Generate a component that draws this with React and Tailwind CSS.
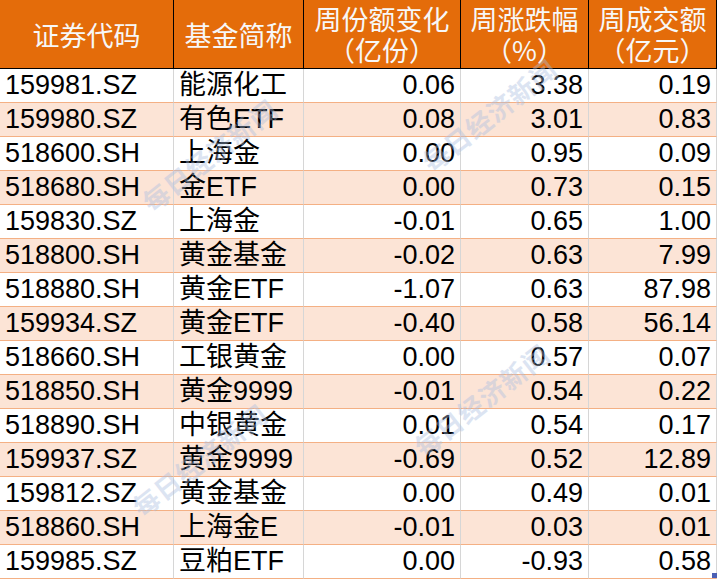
import React from "react";

const rows = [
  ["159981.SZ", "能源化工", "0.06", "3.38", "0.19"],
  ["159980.SZ", "有色ETF", "0.08", "3.01", "0.83"],
  ["518600.SH", "上海金", "0.00", "0.95", "0.09"],
  ["518680.SH", "金ETF", "0.00", "0.73", "0.15"],
  ["159830.SZ", "上海金", "-0.01", "0.65", "1.00"],
  ["518800.SH", "黄金基金", "-0.02", "0.63", "7.99"],
  ["518880.SH", "黄金ETF", "-1.07", "0.63", "87.98"],
  ["159934.SZ", "黄金ETF", "-0.40", "0.58", "56.14"],
  ["518660.SH", "工银黄金", "0.00", "0.57", "0.07"],
  ["518850.SH", "黄金9999", "-0.01", "0.54", "0.22"],
  ["518890.SH", "中银黄金", "0.01", "0.54", "0.17"],
  ["159937.SZ", "黄金9999", "-0.69", "0.52", "12.89"],
  ["159812.SZ", "黄金基金", "0.00", "0.49", "0.01"],
  ["518860.SH", "上海金E", "-0.01", "0.03", "0.01"],
  ["159985.SZ", "豆粕ETF", "0.00", "-0.93", "0.58"],
];

const headers = [
  ["证券代码"],
  ["基金简称"],
  ["周份额变化", "（亿份）"],
  ["周涨跌幅", "（%）"],
  ["周成交额", "（亿元）"],
];

const marks = [
  { left: 128, top: 135 },
  { left: 408, top: 95 },
  { left: 400, top: 380 },
  { left: 118, top: 440 },
];

export default function App() {
  return (
    <div
      className="relative w-[717px] h-[579px] overflow-hidden bg-white text-black"
      style={{ fontFamily: '"Liberation Sans", "Noto Sans CJK SC", sans-serif' }}
    >
      <div className="grid grid-cols-[174px_130px_157px_128px_128px]">
        {headers.map((h, i) => (
          <div
            key={i}
            className="h-[69px] bg-[#E46C0A] border-r border-b border-black flex flex-col items-center justify-center text-[#F7F7F7] text-[27px] leading-[31px]"
            style={{ fontFamily: '"Noto Sans CJK SC", sans-serif' }}
          >
            {h.map((t, j) => (
              <div key={j}>{t}</div>
            ))}
          </div>
        ))}
        {rows.map((r, ri) =>
          r.map((c, ci) => (
            <div
              key={ri + "-" + ci}
              className={
                "h-[34px] border-b border-b-[#F4B084] border-r border-r-[#D6D6D6] flex items-center text-[27px] leading-none whitespace-nowrap " +
                (ri % 2 === 1 ? "bg-[#FCE4D6] " : "bg-white ") +
                (ci < 2 ? "justify-start pl-[5px]" : "justify-end pr-[5px]")
              }
            >
              {c}
            </div>
          ))
        )}
      </div>
      {marks.map((m, i) => (
        <div
          key={i}
          className="absolute pointer-events-none text-[26px] font-bold tracking-[1px] text-[#a9bde0] opacity-40 -rotate-[38deg] whitespace-nowrap"
          style={{ left: m.left, top: m.top, fontFamily: '"Noto Sans CJK SC", serif' }}
        >
          每日经济新闻
        </div>
      ))}
      <div className="absolute left-[712px] top-[573px] w-[5px] h-[5px] bg-[#4A5FB4]" />
    </div>
  );
}
